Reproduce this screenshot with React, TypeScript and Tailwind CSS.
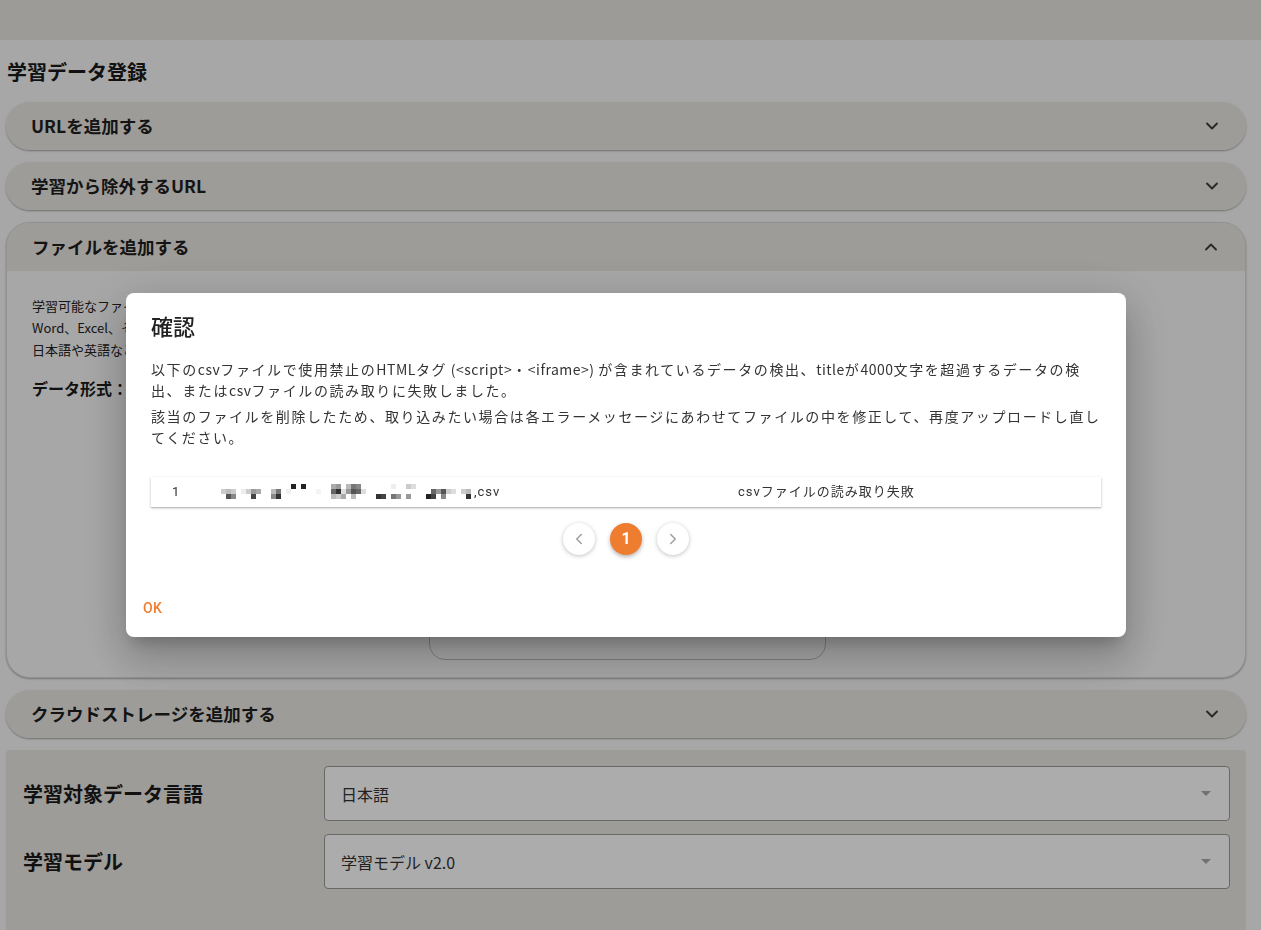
import { ChevronDown, ChevronUp, ChevronLeft, ChevronRight } from 'lucide-react';

const jp = { fontFamily: '"Noto Sans CJK JP", "Noto Sans", sans-serif' };
const rb = { fontFamily: 'Roboto, "Noto Sans CJK JP", sans-serif' };

// mosaic blocks that hide the file name: [x, row, colour]
const mosaic: [number, number, string][] = [
  [0, 1, '#ccc'], [5, 1, '#bbb'], [5, 2, '#555'], [10, 1, '#ccc'], [10, 2, '#888'],
  [20, 1, '#eee'], [25, 1, '#ccc'], [30, 1, '#999'], [30, 2, '#444'], [35, 1, '#aaa'],
  [50, 1, '#bbb'], [50, 2, '#888'], [55, 1, '#777'], [55, 2, '#333'], [65, 1, '#f0f0f0'],
  [70, 0, '#222'], [80, 0, '#222'], [95, 1, '#f4f4f4'],
  [110, 0, '#aaa'], [110, 1, '#666'], [110, 2, '#bbb'], [115, 0, '#999'], [115, 1, '#333'],
  [115, 2, '#ccc'], [120, 1, '#ddd'], [120, 2, '#aaa'], [125, 0, '#bbb'], [125, 1, '#999'],
  [130, 0, '#777'], [130, 1, '#555'], [130, 2, '#bbb'], [135, 0, '#888'], [135, 1, '#666'],
  [140, 1, '#ddd'], [155, 2, '#333'], [160, 2, '#444'], [170, 0, '#eee'], [170, 2, '#777'],
  [175, 2, '#999'], [185, 0, '#ccc'], [185, 2, '#999'], [190, 0, '#ddd'],
  [205, 2, '#222'], [210, 1, '#666'], [210, 2, '#444'], [215, 1, '#999'], [220, 1, '#555'],
  [220, 2, '#888'], [225, 1, '#ccc'], [230, 1, '#ddd'], [240, 1, '#ccc'], [245, 1, '#bbb'],
  [245, 2, '#333'],
];

function AccordionHeader({ title, open = false }: { title: string; open?: boolean }) {
  return (
    <div className="flex h-[48px] items-center justify-between bg-[#eae7e1] pl-[25px] pr-[24px]">
      <span className="text-[17.5px] font-bold text-[#1e1e1e]">{title}</span>
      {open ? (
        <ChevronUp size={20} strokeWidth={2.2} className="text-[#3a3a3a]" />
      ) : (
        <ChevronDown size={20} strokeWidth={2.2} className="text-[#3a3a3a]" />
      )}
    </div>
  );
}

function Accordion({ title }: { title: string }) {
  return (
    <div className="overflow-hidden rounded-[24px] shadow-[0_1px_2px_rgba(0,0,0,0.35)]">
      <AccordionHeader title={title} />
    </div>
  );
}

function SelectField({ value }: { value: string }) {
  return (
    <div className="flex h-[55px] flex-1 items-center justify-between rounded-[4px] border border-[#9a9a9a] bg-white pl-[16px] pr-[18px]">
      <span className="text-[16px] text-[#333]">{value}</span>
      <svg width="10" height="5" viewBox="0 0 10 5">
        <path d="M0 0 L10 0 L5 5 Z" fill="#a8a8a8" />
      </svg>
    </div>
  );
}

// latin runs in the dialog text keep a narrow spacing
function L({ children }: { children: React.ReactNode }) {
  return <span className="tracking-[0.5px]">{children}</span>;
}

function Page() {
  return (
    <div className="h-[930px] overflow-hidden bg-[#f8f8f8]" style={jp}>
      <div className="h-[40px] bg-[#e9e6e0]" />
      <div className="pl-[6px] pr-[15px]">
        <h2 className="mt-[18px] pl-[1px] text-[20px] leading-[27px] font-bold text-[#1a1a1a]">学習データ登録</h2>

        <div className="mt-[17px] flex flex-col gap-[12px]">
          <Accordion title="URLを追加する" />
          <Accordion title="学習から除外するURL" />

          <div className="overflow-hidden rounded-[24px] border border-[#d8d8d8] bg-[#f8f8f8] shadow-[0_1px_2px_rgba(0,0,0,0.3)]">
            <AccordionHeader title="ファイルを追加する" open />
            <div className="px-[25px] pt-[24px] pb-[17px]">
              <div className="text-[13px] leading-[22px] text-[#222]">
                <p>学習可能なファイルはPDF、PowerPoint、テキストファイル、CSVファイルです。</p>
                <p>Word、Excel、その他の形式のファイルはPDFに変換してからアップロードしてください。</p>
                <p>日本語や英語などの言語に対応しています。</p>
              </div>
              <div className="mt-[14px] flex gap-[24px]">
                <span className="text-[16px] leading-[26px] font-bold text-[#1a1a1a]">データ形式：</span>
              </div>
              <div className="mt-[8px] flex">
                <div className="ml-[397px] h-[251px] w-[397px] rounded-[16px] border border-[#bdbdbd]" />
              </div>
            </div>
          </div>

          <Accordion title="クラウドストレージを追加する" />
        </div>

        <div className="mt-[12px] rounded-t-[4px] bg-[#eae7e1] pt-[16px] pr-[16px] pb-[60px] pl-[17px]">
          <div className="flex flex-col gap-[13px]">
            <div className="flex items-center">
              <span className="w-[301px] text-[20px] font-bold text-[#1a1a1a]">学習対象データ言語</span>
              <SelectField value="日本語" />
            </div>
            <div className="flex items-center">
              <span className="w-[301px] text-[20px] font-bold text-[#1a1a1a]">学習モデル</span>
              <SelectField value="学習モデル v2.0" />
            </div>
          </div>
        </div>
      </div>
    </div>
  );
}

function ConfirmDialog() {
  return (
    <div className="fixed inset-0 flex items-center justify-center bg-black/[0.325] pr-[9px]">
      <div className="w-[1000px] rounded-[8px] bg-white shadow-[0_11px_15px_-7px_rgba(0,0,0,0.2),0_24px_38px_3px_rgba(0,0,0,0.14),0_9px_46px_8px_rgba(0,0,0,0.12)]" style={jp}>
        <h2 className="px-[25px] pt-[16px] text-[22px] leading-[32px] font-medium text-[#222]">確認</h2>
        <div className="px-[25px] pt-[18px]">
          <div className="text-[14px] leading-[21px] tracking-[1.6px] whitespace-nowrap text-[#333]">
            <p>
              以下の<L>csv</L>ファイルで使用禁止の<L>HTML</L>タグ<L> (&lt;script&gt;</L>・<L>&lt;iframe&gt;) </L>が含まれているデータの検出、<L>title</L>が<L>4000</L>文字を超過するデータの検
              <br />
              出、または<L>csv</L>ファイルの読み取りに失敗しました。
            </p>
            <p className="mt-[5px]">
              該当のファイルを削除したため、取り込みたい場合は各エラーメッセージにあわせてファイルの中を修正して、再度アップロードし直し
              <br />
              てください。
            </p>
          </div>

          <div
            className="mt-[29px] flex h-[30px] items-center bg-white text-[13px] tracking-[1px] text-[#333] shadow-[0_1px_3px_rgba(0,0,0,0.2),0_1px_1px_rgba(0,0,0,0.14)]"
            style={rb}
          >
            <span className="w-[70px] pl-[21px]">1</span>
            <span className="flex w-[517px] items-center">
              <svg width="253" height="15" viewBox="0 0 253 15" className="mt-[-2px]">
                {mosaic.map(([x, r, c], i) => (
                  <rect key={i} x={x} y={r * 5} width="5" height="5" fill={c} />
                ))}
              </svg>
              <span>,csv</span>
            </span>
            <span>csvファイルの読み取り失敗</span>
          </div>

          <div className="mt-[16px] flex justify-center gap-[15px]">
            <div className="flex h-[32px] w-[32px] items-center justify-center rounded-full bg-white shadow-[0_1px_4px_rgba(0,0,0,0.25)]">
              <ChevronLeft size={18} strokeWidth={2} className="text-[#9e9e9e]" />
            </div>
            <div
              className="flex h-[32px] w-[32px] items-center justify-center rounded-full bg-[#ef7d30] text-[16px] font-bold text-white shadow-[0_2px_4px_rgba(0,0,0,0.3)]"
              style={rb}
            >
              1
            </div>
            <div className="flex h-[32px] w-[32px] items-center justify-center rounded-full bg-white shadow-[0_1px_4px_rgba(0,0,0,0.25)]">
              <ChevronRight size={18} strokeWidth={2} className="text-[#9e9e9e]" />
            </div>
          </div>
        </div>

        <div className="px-[9px] pt-[35px] pb-[11px]">
          <button
            className="h-[36px] px-[8px] text-[14px] font-medium tracking-[0.4px] text-[#ef7d30]"
            style={rb}
          >
            OK
          </button>
        </div>
      </div>
    </div>
  );
}

export default function App() {
  return (
    <div className="relative">
      <Page />
      <ConfirmDialog />
    </div>
  );
}
